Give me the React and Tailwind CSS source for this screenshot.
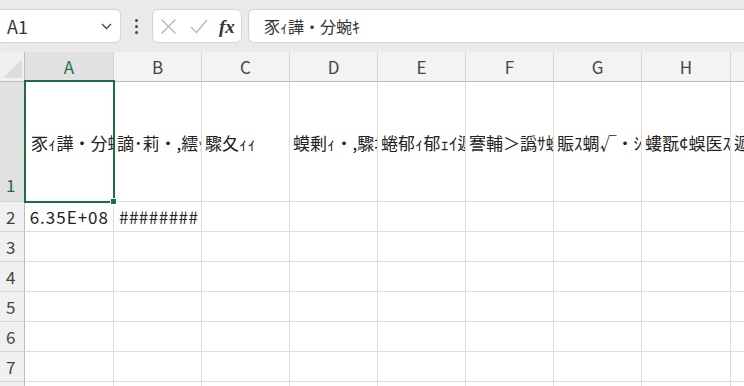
import React from 'react';

const cols = ['A', 'B', 'C', 'D', 'E', 'F', 'G', 'H', 'I'];
const colW = ['w-[89px]', 'w-[88px]', 'w-[88px]', 'w-[88px]', 'w-[88px]', 'w-[88px]', 'w-[88px]', 'w-[89px]', 'w-[40px]'];

const row1 = [
    '豕ｨ譁・分蟆・',
    '謫･莉・,繧ｯ',
    '驟夂ｨｨ',
    '蟆剰ｨ・,驟埼',
    '蜷郁ｨ郁ｪｲ遞',
    '謇輔＞譌ｻ蠑',
    '賑ｽ蜩√・ｼ譁',
    '螻翫¢蜈医ｽ',
    '遞主',
];

function Cell({ w, className = '', children }) {
    return (
        <div className={`${w} shrink-0 border-r border-b border-[#dcdcdc] overflow-hidden whitespace-nowrap ${className}`}>
            {children}
        </div>
    );
}

export default function App() {
    return (
        <div className="relative w-[744px] h-[386px] overflow-hidden bg-white text-[#222]" style={{ fontFamily: '"Noto Sans CJK JP", "Noto Sans", sans-serif' }}>
            {/* Formula bar */}
            <div className="h-[52px] bg-[#eaeaea] flex items-start pt-[9px]">
                <div className="w-[125px] h-[34px] -ml-[4px] pl-[10px] pr-[8px] bg-white border border-[#d4d4d4] rounded-md flex items-center justify-between">
                    <span className="text-[18px] text-[#333]">A1</span>
                    <svg width="11" height="7" viewBox="0 0 11 7" fill="none" stroke="#444" strokeWidth="1.3"><path d="M1 1l4.5 4.5L10 1" /></svg>
                </div>
                <div className="w-[31px] h-[34px] flex flex-col items-center justify-center gap-[3px]">
                    <span className="w-[3px] h-[3px] bg-[#444] rounded-full" />
                    <span className="w-[3px] h-[3px] bg-[#444] rounded-full" />
                    <span className="w-[3px] h-[3px] bg-[#444] rounded-full" />
                </div>
                <div className="w-[90px] h-[34px] bg-white border border-[#d4d4d4] rounded-md flex items-center pl-[7px] gap-[13px]">
                    <svg width="17" height="17" viewBox="0 0 17 17" stroke="#b3b3b3" strokeWidth="1.3" fill="none"><path d="M1.5 1.5l14 14M15.5 1.5l-14 14" /></svg>
                    <svg width="18" height="15" viewBox="0 0 18 15" stroke="#b3b3b3" strokeWidth="1.3" fill="none"><path d="M1 8l5.5 5.5L17 1" /></svg>
                    <span className="text-[19px] font-bold italic text-[#333] leading-none -ml-[2px]" style={{ fontFamily: '"Liberation Serif", serif' }}>fx</span>
                </div>
                <div className="flex-1 h-[34px] ml-[6px] bg-white border border-[#d4d4d4] rounded-l-md border-r-0 flex items-center pl-[15px] text-[16px] text-[#333]">
                    豕ｨ譁・分蜿ｷ
                </div>
            </div>

            {/* Column headers */}
            <div className="flex h-[30px] bg-[#f3f3f3]">
                <div className="w-[25px] shrink-0 border-r border-b border-[#bdbdbd] relative bg-[#f0f0f0]">
                    <svg className="absolute right-[2px] bottom-[3px]" width="19" height="19" viewBox="0 0 19 19"><path d="M19 0V19H0Z" fill="#dcdcdc" /></svg>
                </div>
                {cols.map((c, i) => (
                    <div
                        key={c}
                        className={`${colW[i]} shrink-0 border-r border-r-[#d4d4d4] border-b border-b-[#bdbdbd] flex items-center justify-center text-[17px] ${i === 0 ? 'bg-[#e1e1e1] text-[#1e6e42]' : 'text-[#444]'}`}
                    >
                        {c}
                    </div>
                ))}
            </div>

            {/* Row 1 */}
            <div className="flex h-[120px]">
                <div className="w-[25px] shrink-0 bg-[#e1e1e1] border-r border-r-[#bdbdbd] border-b border-b-[#d4d4d4] flex items-end pl-[6px] pb-[4px] text-[17px] text-[#1e6e42]">1</div>
                {row1.map((t, i) => (
                    <Cell key={i} w={colW[i]} className={`flex items-center text-[17px] pt-[3px] ${i === 0 ? 'pl-[6px]' : 'pl-[3px]'}`}>
                        {t}
                    </Cell>
                ))}
            </div>

            {/* Rows 2..8 */}
            {[2, 3, 4, 5, 6, 7, 8].map((r) => (
                <div key={r} className="flex h-[30px]">
                    <div className="w-[25px] shrink-0 bg-[#f0f0f0] border-r border-r-[#bdbdbd] border-b border-b-[#d4d4d4] flex items-center pl-[6px] text-[17px] text-[#444]">{r}</div>
                    {cols.map((c, i) => (
                        <Cell
                            key={c}
                            w={colW[i]}
                            className={`flex items-center text-[17px] ${i === 0 && r === 2 ? 'justify-end pr-[4px] tracking-[1px]' : 'pl-[5px]'} ${i === 1 && r === 2 ? 'tracking-[0.5px]' : ''}`}
                        >
                            {r === 2 && i === 0 && '6.35E+08'}
                            {r === 2 && i === 1 && '########'}
                        </Cell>
                    ))}
                </div>
            ))}

            {/* Selection around A1 */}
            <div className="absolute left-[24px] top-[80px] w-[91px] h-[123px] border-2 border-[#1e6e42] pointer-events-none">
                <span className="absolute -right-[4px] -bottom-[4px] w-[7px] h-[7px] bg-[#1e6e42] border border-white" />
            </div>
        </div>
    );
}
